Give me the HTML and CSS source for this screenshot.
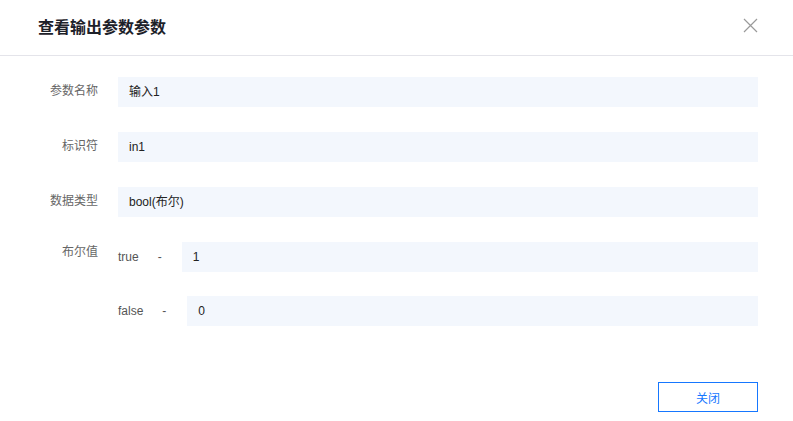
FILE: index.html
```html
<!DOCTYPE html>
<html lang="zh">
<head>
<meta charset="utf-8">
<title>查看输出参数参数</title>
<link rel="stylesheet" href="styles.css">
</head>
<body>
<div class="dialog">
  <div class="header">
    <div class="title">查看输出参数参数</div>
    <svg class="close" width="15" height="15" viewBox="0 0 15 15"><path d="M1 1L14 14M14 1L1 14" stroke="#9a9a9a" stroke-width="1.2" fill="none"/></svg>
  </div>
  <div class="form">
    <div class="row">
      <div class="label">参数名称</div>
      <div class="field">输入1</div>
    </div>
    <div class="row">
      <div class="label">标识符</div>
      <div class="field">in1</div>
    </div>
    <div class="row">
      <div class="label">数据类型</div>
      <div class="field">bool(布尔)</div>
    </div>
    <div class="row bool-row">
      <div class="label label-top">布尔值</div>
      <div class="bool-group">
        <div class="bool-line">
          <span class="bool-key">true</span>
          <span class="dash">-</span>
          <div class="field">1</div>
        </div>
        <div class="bool-line">
          <span class="bool-key">false</span>
          <span class="dash">-</span>
          <div class="field">0</div>
        </div>
      </div>
    </div>
  </div>
  <div class="footer">
    <button class="btn">关闭</button>
  </div>
</div>
</body>
</html>
```
FILE: styles.css
```css
* { box-sizing: border-box; }
html, body { margin: 0; padding: 0; background: #fff; }
body {
  font-family: "Liberation Sans", Arial, "Noto Sans CJK SC", sans-serif;
  font-size: 12px;
  color: #333;
  width: 793px;
  height: 421px;
  overflow: hidden;
}
.dialog { width: 793px; }
.header {
  height: 56px;
  border-bottom: 1px solid #e4e4ea;
  display: flex;
  align-items: center;
  justify-content: space-between;
  padding: 0 35px 3px 38px;
}
.title {
  font-size: 16px;
  font-weight: bold;
  color: #1d2129;
}
.close { display: block; margin-top: -2px; }
.form {
  padding: 21px 35px 0 0;
  display: flex;
  flex-direction: column;
  gap: 25px;
}
.row {
  display: flex;
  align-items: flex-start;
}
.label {
  width: 98px;
  text-align: right;
  margin-right: 20px;
  color: #666;
  line-height: 28px;
  flex: none;
}
.label-top { line-height: 20px; }
.field {
  flex: 1;
  height: 30px;
  line-height: 30px;
  background: #f3f7fd;
  padding-left: 11px;
  color: #222;
}
.bool-group {
  flex: 1;
  display: flex;
  flex-direction: column;
  gap: 24px;
}
.bool-line {
  display: flex;
  align-items: center;
}
.bool-key { color: #555; margin-right: 19px; }
.dash { color: #555; margin-right: 20px; }
.bool-line:last-child .dash { margin-right: 21px; }
.footer {
  display: flex;
  justify-content: flex-end;
  padding: 56px 35px 0 0;
}
.btn {
  width: 100px;
  height: 30px;
  border: 1px solid #1677ff;
  background: #fff;
  color: #1677ff;
  font-family: "Liberation Sans", Arial, "Noto Sans CJK SC", sans-serif;
  font-size: 12px;
  padding: 0;
}
```
